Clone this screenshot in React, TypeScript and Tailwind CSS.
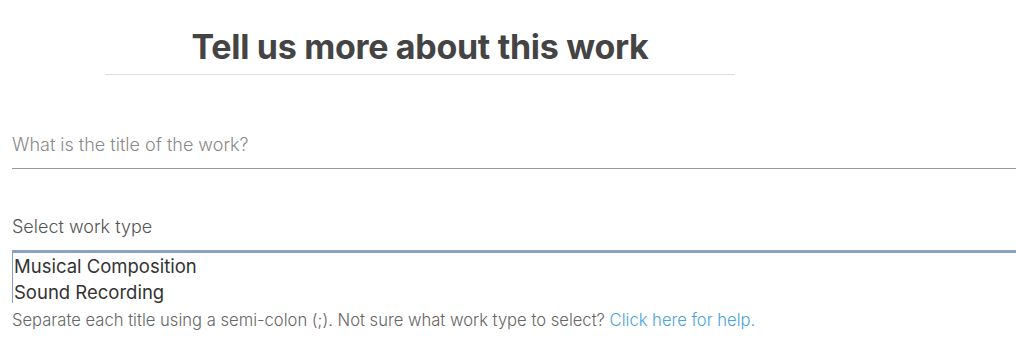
export default function App() {
  return (
    <div className="w-[1016px] h-[357px] overflow-hidden bg-white font-['Inter',sans-serif]">
      <div className="w-[630px] ml-[105px] pt-[27px] pb-[7px] border-b border-[#dddddd]">
        <h1 className="text-center text-[34px] leading-[40px] font-bold text-[#444444] tracking-[-0.3px]">
          Tell us more about this work
        </h1>
      </div>

      <div className="ml-[12px] mt-[58px]">
        <div className="h-[36px] border-b border-[#999999] text-[18px] leading-[24px] text-[#8a8a8a] font-light">
          What is the title of the work?
        </div>

        <div className="mt-[46px] h-[24px] text-[18px] leading-[24px] text-[#555555] font-light">
          Select work type
        </div>

        <div className="mt-[11px] border-t border-[#a0a0a0]">
          <div className="h-[52px] overflow-hidden border-t-2 border-l border-[#7fa0d8] text-[18.5px] leading-[26px] text-[#333333]">
            <div className="pl-[1px]">Musical Composition</div>
            <div className="pl-[1px]">Sound Recording</div>
          </div>
        </div>

        <p className="mt-[6px] text-[16.6px] leading-[22px] text-[#666666] font-light">
          Separate each title using a semi-colon (;). Not sure what work type to select?{" "}
          <a className="text-[#4aa3df]">Click here for help.</a>
        </p>
      </div>
    </div>
  );
}
